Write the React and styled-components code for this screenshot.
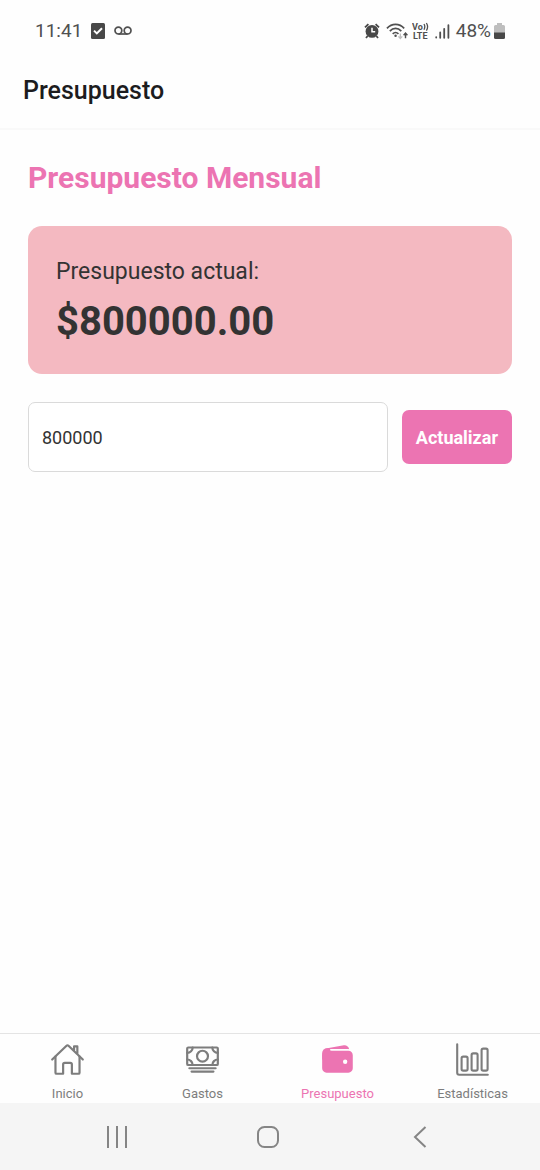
import React, { useState } from "react";
import styled, { createGlobalStyle } from "styled-components";
import { IoHomeOutline, IoCashOutline, IoWallet } from "react-icons/io5";

const GlobalStyle = createGlobalStyle`
  * { box-sizing: border-box; }
  body {
    margin: 0;
    background: #fefefe;
    color: #333333;
    font-family: Roboto, "Liberation Sans", sans-serif;
  }
`;

const Screen = styled.div`
  display: flex;
  flex-direction: column;
  min-height: 100vh;
`;

const StatusBar = styled.div`
  display: flex;
  align-items: center;
  justify-content: space-between;
  height: 54px;
  padding: 8px 35px 0;
  color: #505050;
  font-size: 19px;
  line-height: 24px;
`;

const StatusGroup = styled.div`
  display: flex;
  align-items: center;
  gap: ${(p) => p.$gap}px;
`;

const Header = styled.header`
  display: flex;
  align-items: center;
  height: 76px;
  padding: 0 23px;
  border-bottom: 2px solid #f9f9f9;
`;

const HeaderTitle = styled.h1`
  margin: 0;
  color: #1c1c1e;
  font-size: 25px;
  line-height: 32px;
  font-weight: 500;
`;

const Content = styled.main`
  display: flex;
  flex: 1;
  flex-direction: column;
  gap: 28px;
  padding: 28px;
`;

const SectionTitle = styled.h2`
  margin: 0;
  color: #ec74b2;
  font-size: 30px;
  line-height: 40px;
  font-weight: 700;
`;

const BudgetCard = styled.section`
  display: flex;
  flex-direction: column;
  gap: 8px;
  padding: 29px 28px 27px;
  border-radius: 14px;
  background: #f4b9c1;
`;

const BudgetLabel = styled.div`
  font-size: 23px;
  line-height: 34px;
`;

const BudgetAmount = styled.div`
  font-size: 40px;
  line-height: 50px;
  font-weight: 700;
`;

const BudgetForm = styled.form`
  display: flex;
  align-items: center;
  gap: 14px;
`;

const AmountInput = styled.input`
  flex: 1;
  min-width: 0;
  height: 70px;
  padding: 0 13px;
  border: 1px solid #dadada;
  border-radius: 7px;
  outline: none;
  background: #ffffff;
  color: #333333;
  font: 400 18px/24px Roboto, "Liberation Sans", sans-serif;
`;

const UpdateButton = styled.button`
  height: 54px;
  padding: 2px 14px 0;
  border: 0;
  border-radius: 7px;
  background: #ec74b2;
  color: #ffffff;
  font: 700 18px/24px Roboto, "Liberation Sans", sans-serif;
`;

const TabBar = styled.nav`
  display: grid;
  grid-template-columns: repeat(4, 1fr);
  height: 70px;
  border-top: 1px solid #e4e4e4;
`;

const Tab = styled.a`
  display: flex;
  flex-direction: column;
  align-items: center;
  gap: 9px;
  padding-top: 8px;
  color: ${(p) => (p.$active ? "#ec74b2" : "#7d7d7d")};
  font-size: 13px;
  line-height: 16px;
  text-decoration: none;
`;

const SystemBar = styled.div`
  display: grid;
  grid-template-columns: repeat(3, 1fr);
  height: 67px;
  padding: 0 44px 0 40px;
  background: #f5f5f5;
`;

const SystemButton = styled.button`
  display: flex;
  align-items: center;
  justify-content: center;
  padding: 0;
  border: 0;
  background: transparent;
  color: #858585;
`;

function ChartIcon({ size }) {
  return (
    <svg width={size} height={size} viewBox="0 0 35 35" fill="none" stroke="currentColor" strokeWidth="2.1" strokeLinecap="round" strokeLinejoin="round" aria-hidden="true">
      <path d="M2.2 2.2v28.6q0 2 2 2h28.6" />
      <rect x="6.6" y="14.6" width="6" height="14" rx="1.6" />
      <rect x="16.6" y="11.4" width="6" height="17.2" rx="1.6" />
      <rect x="26.6" y="6.6" width="6" height="22" rx="1.6" />
    </svg>
  );
}

const tabs = [
  { label: "Inicio", Icon: IoHomeOutline },
  { label: "Gastos", Icon: IoCashOutline },
  { label: "Presupuesto", Icon: IoWallet, active: true },
  { label: "Estadísticas", Icon: ChartIcon },
];

function TaskIcon() {
  return (
    <svg width="14" height="16" viewBox="0 0 14 16" aria-hidden="true">
      <rect width="14" height="16" rx="1.5" fill="#484848" />
      <path d="M3 7.6l2.8 2.8L11 5.2" fill="none" stroke="#fff" strokeWidth="2" />
    </svg>
  );
}

function VoicemailIcon() {
  return (
    <svg width="18" height="10" viewBox="0 0 18 10" fill="none" stroke="currentColor" strokeWidth="1.7" aria-hidden="true">
      <circle cx="4.4" cy="4.6" r="3.4" />
      <circle cx="13.6" cy="4.6" r="3.4" />
      <path d="M4.4 8h9.2" />
    </svg>
  );
}

function AlarmIcon() {
  return (
    <svg width="16" height="16" viewBox="0 0 16 16" aria-hidden="true">
      <circle cx="8" cy="8.4" r="6.4" fill="#484848" />
      <path d="M1 4.4L4.4 1.2M15 4.4L11.6 1.2M3.6 13l-1.6 2M12.4 13l1.6 2" stroke="#484848" strokeWidth="1.8" />
      <path d="M8 4.8v4h3.2" fill="none" stroke="#fff" strokeWidth="1.5" />
    </svg>
  );
}

function WifiIcon() {
  return (
    <svg width="22" height="18" viewBox="0 0 23 18" fill="none" stroke="#505050" aria-hidden="true">
      <path d="M1 6.2C6 .7 14 .7 19 6.2M4 9.2c3.6-3.8 8.4-3.8 12 0M7 12c1.9-1.9 4.1-1.9 6 0" strokeWidth="1.8" />
      <circle cx="10" cy="14" r="1.3" fill="#505050" stroke="none" />
      <path d="M15 11.5v5M13 14.6l2 2.2 2-2.2" stroke="#c0c0c0" strokeWidth="1.4" />
      <path d="M20.4 16.5v-5M18.4 13.4l2-2.2 2 2.2" strokeWidth="1.5" />
    </svg>
  );
}

function VolteIcon() {
  return (
    <svg width="17" height="18" viewBox="0 0 17 18" fill="#505050" fontFamily="Roboto, sans-serif" fontWeight="700" aria-hidden="true">
      <text x="0" y="8" fontSize="9">Vo</text>
      <text x="1" y="17" fontSize="9">LTE</text>
      <path d="M12 2q1.6 2.8 0 5.8M14.4 1q2.4 3.8 0 7.6" fill="none" stroke="#505050" strokeWidth="1.3" />
    </svg>
  );
}

function SignalIcon() {
  return (
    <svg width="15" height="15" viewBox="0 0 15 15" stroke="#505050" strokeWidth="1.8" strokeLinecap="round" aria-hidden="true">
      <path d="M1.2 13.6v-.4M5.2 13.8V8.4M9.2 13.8V4.8M13.4 13.8V1.2" />
    </svg>
  );
}

function BatteryIcon() {
  return (
    <svg width="11" height="16" viewBox="0 0 11 16" aria-hidden="true">
      <path d="M3 0h5v2h1.5Q11 2 11 3.5V10H0V3.5Q0 2 1.5 2H3z" fill="#bebebe" />
      <path d="M0 9.4h11v5Q11 16 9.5 16h-8Q0 16 0 14.4z" fill="#484848" />
    </svg>
  );
}

export default function App() {
  const [amount, setAmount] = useState("800000");
  const [budget, setBudget] = useState(800000);

  const updateBudget = (event) => {
    event.preventDefault();
    setBudget(Number(amount) || 0);
  };

  return (
    <Screen>
      <GlobalStyle />
      <StatusBar>
        <StatusGroup $gap={9}>
          <span>11:41</span>
          <TaskIcon />
          <VoicemailIcon />
        </StatusGroup>
        <StatusGroup $gap={6}>
          <AlarmIcon />
          <StatusGroup $gap={4}>
            <WifiIcon />
            <VolteIcon />
          </StatusGroup>
          <SignalIcon />
          <StatusGroup $gap={3}>
            <span>48%</span>
            <BatteryIcon />
          </StatusGroup>
        </StatusGroup>
      </StatusBar>
      <Header>
        <HeaderTitle>Presupuesto</HeaderTitle>
      </Header>
      <Content>
        <SectionTitle>Presupuesto Mensual</SectionTitle>
        <BudgetCard>
          <BudgetLabel>Presupuesto actual:</BudgetLabel>
          <BudgetAmount>${budget.toFixed(2)}</BudgetAmount>
        </BudgetCard>
        <BudgetForm onSubmit={updateBudget}>
          <AmountInput
            aria-label="Presupuesto"
            inputMode="numeric"
            value={amount}
            onChange={(event) => setAmount(event.target.value)}
          />
          <UpdateButton type="submit">Actualizar</UpdateButton>
        </BudgetForm>
      </Content>
      <TabBar>
        {tabs.map(({ label, Icon, active }) => (
          <Tab key={label} href="#" $active={active} aria-current={active ? "page" : undefined}>
            <Icon size={35} aria-hidden="true" />
            <span>{label}</span>
          </Tab>
        ))}
      </TabBar>
      <SystemBar>
        <SystemButton type="button" aria-label="Recientes">
          <svg width="22" height="22" viewBox="0 0 22 22" stroke="currentColor" strokeWidth="2">
            <path d="M3 0v22M12 0v22M21 0v22" />
          </svg>
        </SystemButton>
        <SystemButton type="button" aria-label="Pantalla de inicio">
          <svg width="22" height="22" viewBox="0 0 22 22" fill="none" stroke="currentColor" strokeWidth="2">
            <rect x="1" y="1" width="20" height="20" rx="6.5" />
          </svg>
        </SystemButton>
        <SystemButton type="button" aria-label="Atrás">
          <svg width="14" height="22" viewBox="0 0 14 22" fill="none" stroke="currentColor" strokeWidth="2">
            <path d="M12.5 1L2 11l10.5 10" />
          </svg>
        </SystemButton>
      </SystemBar>
    </Screen>
  );
}
